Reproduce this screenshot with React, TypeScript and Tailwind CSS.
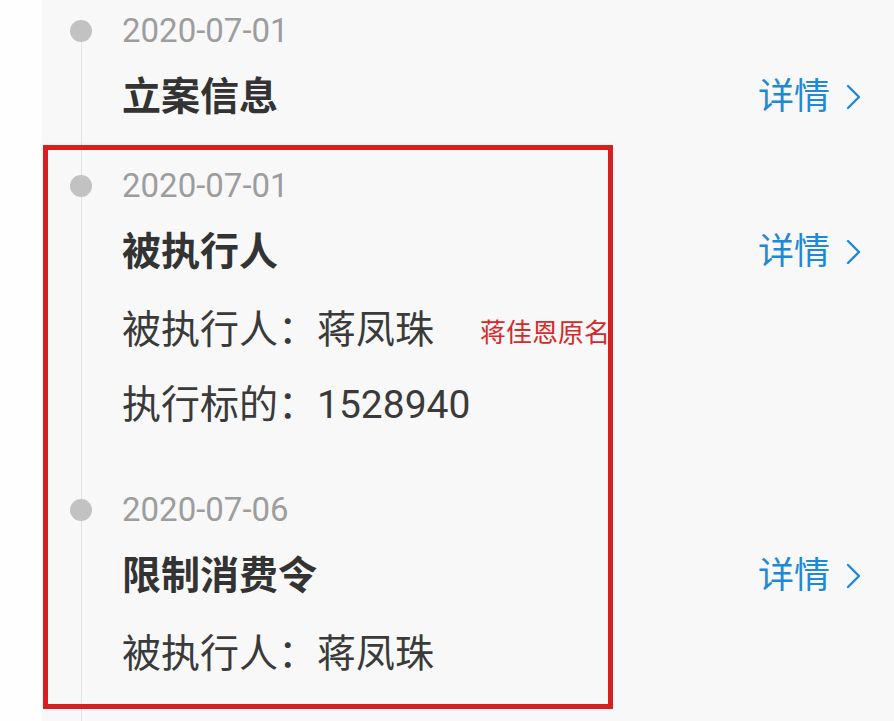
import React from "react";

type Item = {
  date: string;
  title: string;
  lines: { text: string; note?: string }[];
};

const ITEMS: Item[] = [
  { date: "2020-07-01", title: "立案信息", lines: [] },
  {
    date: "2020-07-01",
    title: "被执行人",
    lines: [
      { text: "被执行人：蒋凤珠", note: "蒋佳恩原名" },
      { text: "执行标的：1528940" },
    ],
  },
  {
    date: "2020-07-06",
    title: "限制消费令",
    lines: [{ text: "被执行人：蒋凤珠" }],
  },
];

function Chevron() {
  return (
    <svg width="18" height="30" viewBox="0 0 18 30" fill="none">
      <polyline
        points="4,4 15,15 4,26"
        stroke="#2089d6"
        strokeWidth="2.4"
        strokeLinecap="round"
        strokeLinejoin="round"
      />
    </svg>
  );
}

export default function App() {
  return (
    <div
      className="relative h-[721px] w-full overflow-hidden bg-[#fefefe]"
      style={{ fontFamily: 'Roboto, "Noto Sans CJK SC", sans-serif' }}
    >
      <div className="ml-[42px] h-full bg-[#f8f8f8]">
        <div className="relative">
          {/* timeline rail */}
          <div className="absolute left-[39px] top-[40px] bottom-[-200px] w-px bg-[#e3e3e3]" />

          {ITEMS.map((item, i) => (
            <div
              key={i}
              className={`relative pl-[80px] pr-[32px] ${
                item.lines.length > 0 ? "pb-[36px]" : "pb-[23px]"
              }`}
            >
              <span className="absolute left-[28px] top-[20px] h-[22px] w-[22px] rounded-full bg-[#c2c2c2]" />
              <div className="h-[62px] text-[33px] leading-[62px] text-[#9d9d9d]">
                {item.date}
              </div>
              <div className="flex h-[70px] items-center justify-between">
                <span className="text-[39px] font-bold text-[#333]">
                  {item.title}
                </span>
                <span className="flex items-center gap-[14px] text-[36px] text-[#2089d6]">
                  详情
                  <Chevron />
                </span>
              </div>
              {item.lines.length > 0 && (
                <div className="mt-[6px]">
                  {item.lines.map((l, j) => (
                    <div key={j} className="flex h-[75px] items-center">
                      <span className="text-[39px] text-[#3a3a3a]">{l.text}</span>
                      {l.note && (
                        <span className="ml-[46px] mt-[6px] text-[26px] text-[#d42a2a]">
                          {l.note}
                        </span>
                      )}
                    </div>
                  ))}
                </div>
              )}
            </div>
          ))}
        </div>
      </div>

      {/* annotation frame */}
      <div className="pointer-events-none absolute left-[43px] top-[145px] h-[564px] w-[570px] border-[5px] border-[#d81e1e]" />
    </div>
  );
}
